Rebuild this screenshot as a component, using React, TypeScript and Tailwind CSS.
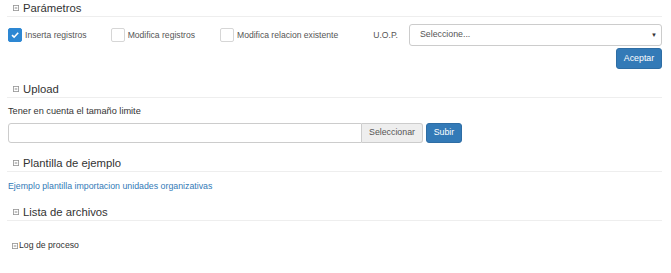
import React, { useState } from 'react';

const MinusBox: React.FC<{ size?: number }> = ({ size = 7 }) => (
  <svg width={size} height={size} viewBox="0 0 7 7" className="shrink-0">
    <rect x="0.5" y="0.5" width="6" height="6" fill="none" stroke="#9a9a9a" strokeWidth="1" />
    <line x1="2" y1="3.5" x2="5" y2="3.5" stroke="#777" strokeWidth="1" />
  </svg>
);

const SectionTitle: React.FC<{ title: string; className?: string }> = ({ title, className = '' }) => (
  <div className={`flex items-center h-[17px] border-b border-[#eeeeee] pl-[6px] ${className}`}>
    <MinusBox size={6} />
    <span className="ml-[4px] text-[11.3px] leading-[16px] text-[#333]">{title}</span>
  </div>
);

const Check: React.FC<{ label: string; checked: boolean; onToggle: () => void; className?: string }> = ({
  label,
  checked,
  onToggle,
  className = '',
}) => (
  <label className={`flex items-center cursor-pointer ${className}`} onClick={onToggle}>
    <span
      className={`w-[14px] h-[14px] rounded-[2px] flex items-center justify-center ${
        checked ? 'bg-[#2d87d3] border border-[#2d87d3]' : 'bg-white border border-[#d6d6d6]'
      }`}
    >
      {checked && (
        <svg width="10" height="10" viewBox="0 0 10 10">
          <path d="M2 5.2 L4.1 7.2 L8.2 2.8" fill="none" stroke="#fff" strokeWidth="1.6" />
        </svg>
      )}
    </span>
    <span className="ml-[3px] text-[8.6px] text-[#555]">{label}</span>
  </label>
);

const App: React.FC = () => {
  const [inserta, setInserta] = useState(true);
  const [modifica, setModifica] = useState(false);
  const [relacion, setRelacion] = useState(false);

  return (
    <div className="pl-[7px] pr-[9px] font-['Liberation_Sans',Arial,sans-serif] text-[#333] bg-white min-h-[273px]">
      <SectionTitle title="Parámetros" />
      <div className="flex items-center mt-[7px] pl-[1px] h-[22px]">
        <Check label="Inserta registros" checked={inserta} onToggle={() => setInserta(!inserta)} />
        <Check label="Modifica registros" checked={modifica} onToggle={() => setModifica(!modifica)} className="ml-[24px]" />
        <Check label="Modifica relacion existente" checked={relacion} onToggle={() => setRelacion(!relacion)} className="ml-[25px]" />
        <span className="ml-[35px] text-[8.6px] text-[#555]">U.O.P.</span>
        <div className="ml-[11px] flex-1 h-[22px] border border-[#cccccc] rounded-[3px] flex items-center justify-between pl-[10px] pr-[4px]">
          <span className="text-[8.8px] text-[#555]">Seleccione...</span>
          <span className="text-[6px] text-[#333]">▼</span>
        </div>
      </div>
      <div className="flex justify-end mt-[2px]">
        <button className="w-[46px] h-[21px] bg-[#337ab7] border border-[#2e6da4] rounded-[3px] text-white text-[8.8px]">
          Aceptar
        </button>
      </div>

      <SectionTitle title="Upload" className="mt-[12px]" />
      <div className="mt-[6px] pl-[1px] text-[9.2px] leading-[14px] text-[#333]">Tener en cuenta el tamaño limite</div>
      <div className="flex mt-[5px] pl-[1px] h-[20px]">
        <div className="w-[354px] border border-[#cccccc] rounded-l-[3px] bg-white" />
        <button className="w-[61px] border border-l-0 border-[#cccccc] bg-[#eeeeee] text-[8.8px] text-[#555] rounded-r-[3px]">
          Seleccionar
        </button>
        <button className="ml-[3px] w-[36px] bg-[#337ab7] border border-[#2e6da4] rounded-[3px] text-white text-[8.8px]">
          Subir
        </button>
      </div>

      <SectionTitle title="Plantilla de ejemplo" className="mt-[12px]" />
      <div className="mt-[7px] pl-[1px] text-[8.8px] leading-[14px]">
        <a className="text-[#337ab7]" href="#">Ejemplo plantilla importacion unidades organizativas</a>
      </div>

      <SectionTitle title="Lista de archivos" className="mt-[11px]" />
      <div className="flex items-center mt-[18px] pl-[5px] h-[14px]">
        <MinusBox size={6} />
        <span className="ml-[1px] text-[8.7px] text-[#333]">Log de proceso</span>
      </div>
    </div>
  );
};

export default App;
